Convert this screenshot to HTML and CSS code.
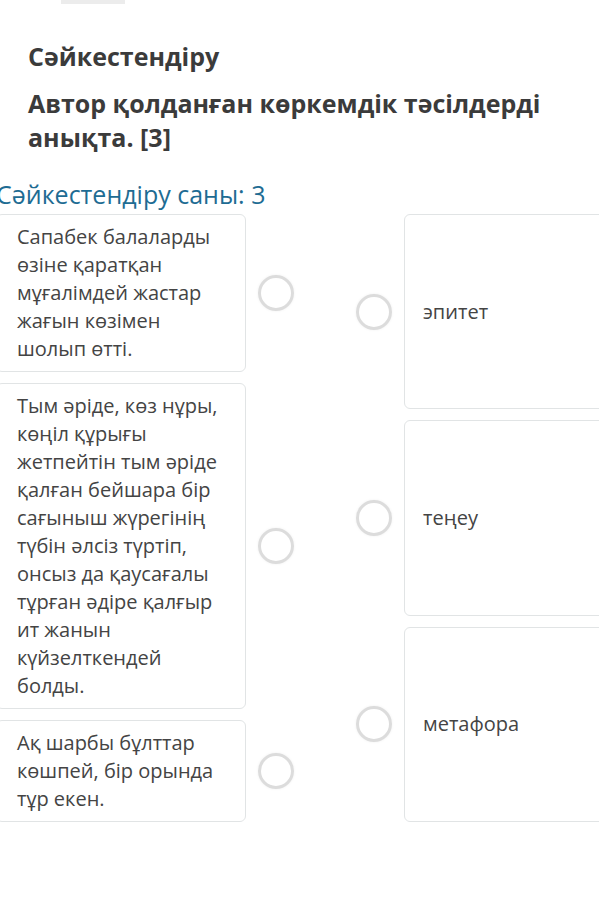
FILE: index.html
```html
<!DOCTYPE html>
<html lang="kk">
<head>
    <meta charset="UTF-8">
    <meta name="viewport" content="width=device-width, initial-scale=1.0">
    <title>Сәйкестендіру</title>
    <link rel="stylesheet" href="styles.css">
</head>
<body>
    <div class="top-bar"></div>
    <div class="question">
        <h2 class="q-type">Сәйкестендіру</h2>
        <h2 class="q-text">Автор қолданған көркемдік тәсілдерді анықта. [3]</h2>
    </div>
    <div class="match">
        <p class="match-count">Сәйкестендіру саны: 3</p>
        <div class="match-grid">
            <!-- сол жақ: сөйлемдер -->
            <div class="col col-left">
                <div class="item">
                    <div class="card">Сапабек балаларды өзіне қаратқан мұғалімдей жастар жағын көзімен шолып өтті.</div>
                    <span class="dot"></span>
                </div>
                <div class="item">
                    <div class="card">Тым әріде, көз нұры, көңіл құрығы жетпейтін тым әріде қалған бейшара бір сағыныш жүрегінің түбін әлсіз түртіп, онсыз да қаусағалы тұрған әдіре қалғыр ит жанын күйзелткендей болды.</div>
                    <span class="dot"></span>
                </div>
                <div class="item">
                    <div class="card">Ақ шарбы бұлттар көшпей, бір орында тұр екен.</div>
                    <span class="dot"></span>
                </div>
            </div>
            <!-- оң жақ: тәсілдер -->
            <div class="col col-right">
                <div class="item">
                    <span class="dot"></span>
                    <div class="card">эпитет</div>
                </div>
                <div class="item">
                    <span class="dot"></span>
                    <div class="card">теңеу</div>
                </div>
                <div class="item">
                    <span class="dot"></span>
                    <div class="card">метафора</div>
                </div>
            </div>
        </div>
    </div>
</body>
</html>
```
FILE: styles.css
```css
html {
    overflow: hidden;
}
body {
    font-family: "Open Sans", Arial, sans-serif;
    margin: 0;
    padding: 0;
    background-color: #fff;
    color: #444;
}
.top-bar {
    width: 64px;
    height: 4px;
    margin-left: 61px;
    background: #ececec;
}
.question {
    padding: 35px 28px 0;
}
.q-type,
.q-text {
    font-size: 25px;
    font-weight: 700;
    color: #3b3b3b;
    margin: 0;
    line-height: 34px;
}
.q-type {
    margin-bottom: 13px;
}
.match {
    margin-left: -4px;
    margin-top: 25px;
}
.match-count {
    font-size: 25px;
    color: #1e6c93;
    margin: 0 0 5px;
    line-height: 30px;
}
.match-grid {
    display: flex;
    align-items: stretch;
    gap: 62px;
    width: 700px;
}
.col {
    display: flex;
    flex-direction: column;
}
.col-left {
    gap: 11px;
    width: 298px;
}
.col-right {
    gap: 11px;
    flex: 1;
}
.item {
    display: flex;
    align-items: center;
    gap: 12px;
}
.col-right .item {
    flex: 1;
}
.card {
    background: #fff;
    border: 1px solid #e1e4e5;
    border-radius: 6px;
    font-size: 20px;
    line-height: 28px;
    color: #444;
    box-sizing: border-box;
}
.col-left .card {
    width: 250px;
    padding: 8px 16px 8px 20px;
}
.col-right .card {
    align-self: stretch;
    flex: 1;
    display: flex;
    align-items: center;
    padding: 0 18px;
}
.dot {
    flex: none;
    width: 30px;
    height: 30px;
    border: 3px solid #dcdcdc;
    border-radius: 50%;
    box-shadow: 0 0 3px rgba(0, 0, 0, 0.06);
}
```
